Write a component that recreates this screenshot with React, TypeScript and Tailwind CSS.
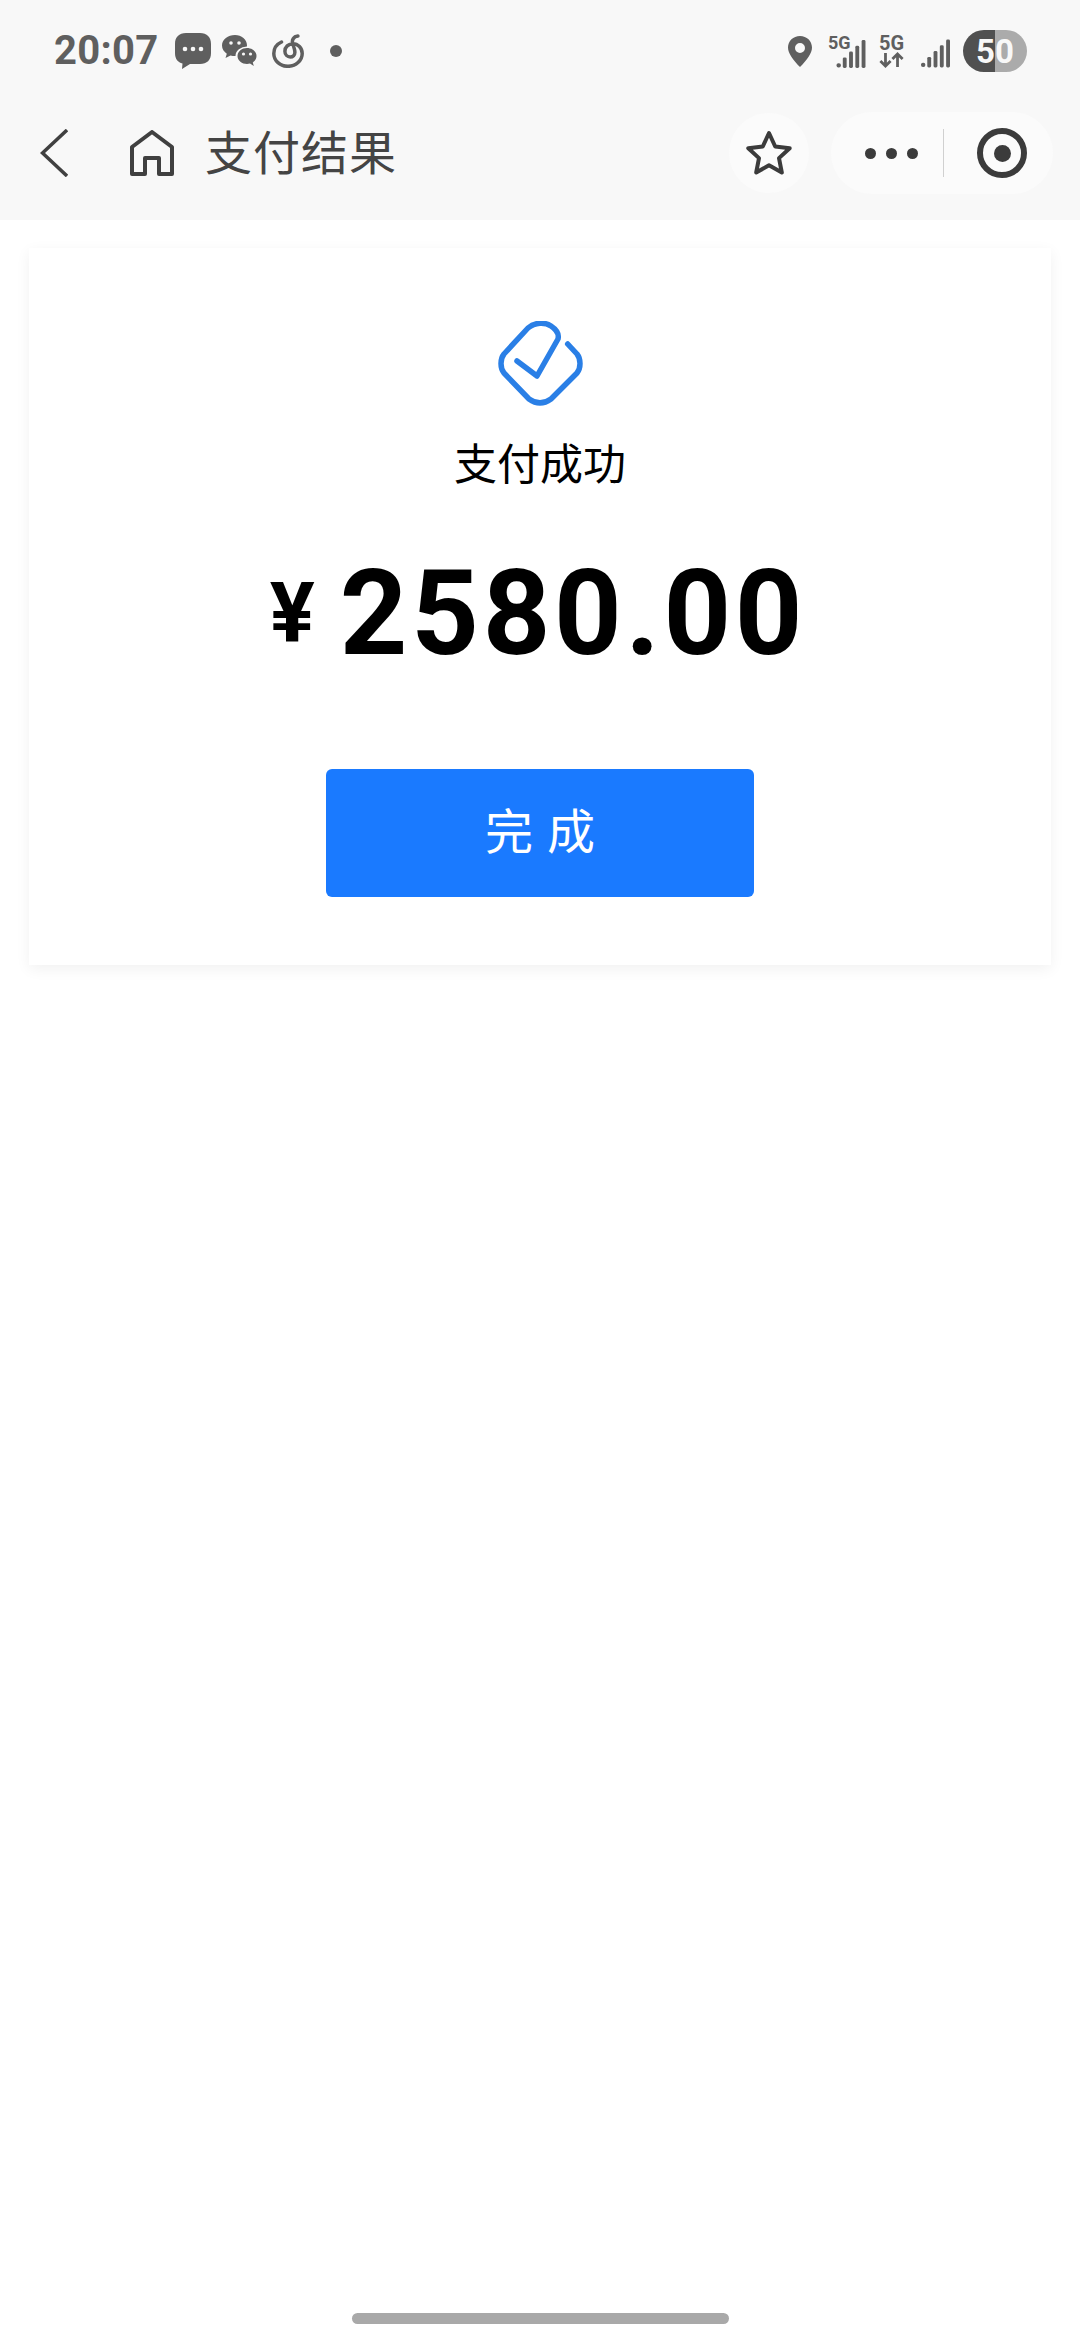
const sans = "font-['Roboto','Noto_Sans_CJK_SC',sans-serif]";

function SignalBars({ className }: { className: string }) {
  return (
    <svg viewBox="0 0 30 29" className={className} fill="#5f5f5f">
      <rect x="0" y="24" width="4.500" height="4.500" rx="2" />
      <rect x="6.500" y="18" width="4" height="11" rx="1.500" />
      <rect x="13" y="12" width="4" height="17" rx="1.500" />
      <rect x="19.500" y="6" width="4" height="23" rx="1.500" />
      <rect x="26" y="0" width="4" height="29" rx="1.500" />
    </svg>
  );
}

function StatusBar() {
  return (
    <div className="flex items-center justify-between h-[102px] pl-[54px] pr-[53px]">
      <div className="flex items-center">
        <span className="text-[40px] leading-none font-bold tracking-[0.3px] text-[#5f5f5f]">20:07</span>
        {/* message bubble */}
        <svg viewBox="0 0 36 36" className="w-[36px] h-[36px] ml-[16px]">
          <path
            d="M11 0h14c7 0 11 4 11 11v9c0 7-4 11-11 11H15l-8 5 .5-5.500C3 29.500 0 26 0 20v-9C0 4 4 0 11 0z"
            fill="#5f5f5f"
          />
          <circle cx="10" cy="16" r="2.300" fill="#f8f8f8" />
          <circle cx="18" cy="16" r="2.300" fill="#f8f8f8" />
          <circle cx="26" cy="16" r="2.300" fill="#f8f8f8" />
        </svg>
        {/* wechat */}
        <svg viewBox="0 0 36 32" className="w-[36px] h-[32px] ml-[11px]">
          <path
            d="M13 0C6 0 0 4.500 0 10.500c0 3.500 2 6.300 4.800 8.200L3.500 23l5-2.600c1.500.4 3 .6 4.500.6 6.500 0 12-4.500 12-10.500S19.500 0 13 0z"
            fill="#5f5f5f"
          />
          <ellipse cx="25" cy="21" rx="11.500" ry="9.500" fill="#f8f8f8" />
          <path
            d="M25 13c-5 0-9.500 3.400-9.500 8s4.500 8 9.500 8c1 0 2-.1 3-.4l3.800 2.400-1-3.500c2.300-1.500 3.700-4 3.700-6.500 0-4.600-4.500-8-9.500-8z"
            fill="#5f5f5f"
          />
          <circle cx="9" cy="8" r="1.800" fill="#f8f8f8" />
          <circle cx="17" cy="8" r="1.800" fill="#f8f8f8" />
          <circle cx="21.500" cy="19" r="1.600" fill="#f8f8f8" />
          <circle cx="28.500" cy="19" r="1.600" fill="#f8f8f8" />
        </svg>
        {/* netease music */}
        <svg viewBox="0 0 32 34" className="w-[32px] h-[34px] ml-[14px]" fill="none" stroke="#5f5f5f">
          <path
            d="M9.500 8C4.500 10.300 1.800 14.500 1.800 19.500c0 7.300 6.400 12.800 14.200 12.800s14.200-5.800 14.200-12.800c0-5.500-4.300-9.800-9.300-9.800-4.500 0-8 3.300-8 7.600 0 3.300 2.500 5.700 5.300 5.700 2.700 0 4.700-2 4.700-4.700 0-3-1.300-5.500-2.300-9-.8-3 .7-6.800 5.300-7.300"
            strokeWidth="3.500"
            strokeLinecap="round"
          />
        </svg>
        <span className="w-[12px] h-[12px] rounded-full bg-[#5f5f5f] ml-[26px]" />
      </div>

      <div className="flex items-center">
        {/* location pin */}
        <svg viewBox="0 0 24 31" className="w-[24px] h-[31px]">
          <path
            fillRule="evenodd"
            d="M12 0c6.800 0 12 5 12 11.500 0 5.500-5 12.500-12 19.500C5 24 0 17 0 11.500 0 5 5.200 0 12 0zm0 7a5 5 0 1 0 0 10 5 5 0 0 0 0-10z"
            fill="#5f5f5f"
          />
        </svg>
        <div className="relative w-[38px] h-[34px] ml-[16px]">
          <span className="absolute left-0 top-[-2px] text-[18px] leading-[22px] font-bold text-[#5f5f5f]">5G</span>
          <SignalBars className="absolute right-0 bottom-0 w-[30px] h-[28px]" />
        </div>
        <div className="flex flex-col items-center w-[25px] ml-[13px]">
          <span className="text-[20px] leading-[18px] font-bold text-[#5f5f5f]">5G</span>
          <svg viewBox="0 0 27 17" className="w-[25px] h-[16px]" fill="none" stroke="#5f5f5f" strokeWidth="3">
            <path d="M7 1v14M1.500 9.500L7 15l5.500-5.500" />
            <path d="M20 16V2M14.500 7.500L20 2l5.500 5.500" />
          </svg>
        </div>
        <SignalBars className="w-[29px] h-[29px] ml-[17px] mt-[4px]" />
        <div className="relative flex w-[64px] h-[42px] ml-[13px] rounded-full overflow-hidden">
          <span className="w-[32px] bg-[#505050]" />
          <span className="w-[32px] bg-[#ababab]" />
          <span className="absolute inset-0 flex items-center justify-center text-[33px] leading-none font-bold text-[#f8f8f8]">
            50
          </span>
        </div>
      </div>
    </div>
  );
}

function NavBar() {
  return (
    <div className="flex items-center h-[118px] pb-[16px]">
      <svg viewBox="0 0 28 48" className="w-[28px] h-[48px] ml-[40px]" fill="none" stroke="#404040" strokeWidth="3.500">
        <path d="M27 1L2.500 24 27 47" />
      </svg>
      <svg viewBox="0 0 44 47" className="w-[44px] h-[47px] ml-[62px]" fill="none" stroke="#404040" strokeWidth="4" strokeLinejoin="round">
        <path d="M22 2L42 17v27H29V28H15v16H2V17z" />
      </svg>
      <span className="text-[47px] tracking-[1px] leading-none ml-[31px] text-[#444]">支付结果</span>

      <div className="flex items-center justify-center w-[80px] h-[80px] ml-auto rounded-full bg-[#fbfbfb]">
        <svg viewBox="0 0 46 46" className="w-[46px] h-[46px]" fill="none" stroke="#3b3b3b" strokeWidth="4" strokeLinejoin="round">
          <path d="M23 3l6.200 13.500 14.500 1.700-10.700 9.900 2.800 14.400L23 35.300l-12.800 7.200L13 28.100 2.300 18.200l14.500-1.700z" />
        </svg>
      </div>
      <div className="flex items-center w-[222px] h-[82px] ml-[22px] mr-[27px] rounded-full bg-[#fbfbfb]">
        <div className="flex items-center gap-[10px] ml-[34px]">
          <span className="w-[11px] h-[11px] rounded-full bg-[#3b3b3b]" />
          <span className="w-[11px] h-[11px] rounded-full bg-[#3b3b3b]" />
          <span className="w-[11px] h-[11px] rounded-full bg-[#3b3b3b]" />
        </div>
        <span className="w-[1px] h-[48px] ml-[25px] bg-[#d0d0d0]" />
        <div className="flex items-center justify-center w-[50px] h-[50px] ml-[33px] rounded-full border-[6px] border-[#3b3b3b]">
          <span className="w-[17px] h-[17px] rounded-full bg-[#3b3b3b]" />
        </div>
      </div>
    </div>
  );
}

export default function App() {
  return (
    <div className={`flex flex-col w-[1080px] h-[2340px] bg-white ${sans}`}>
      <div className="bg-[#f8f8f8]">
        <StatusBar />
        <NavBar />
      </div>

      <div className="flex flex-col items-center h-[717px] mx-[29px] mt-[28px] pt-[73px] bg-white shadow-[0_4px_14px_rgba(0,0,0,0.06)]">
        <svg viewBox="0 0 85 85" className="w-[85px] h-[85px]" fill="none" stroke="#2a7fe6" strokeWidth="5.500" strokeLinecap="round" strokeLinejoin="round">
          <path d="M69.700 23L79 33c4 5 4 14 0 19L53 78c-7 5-15 5-22 0L6 52c-4-5-4-14 0-19L30 7c7-6 17-6 23-2 6 4 8 9 7 13L39 55 19 40" />
        </svg>
        <div className="mt-[30px] text-[43px] leading-[58px] text-black">支付成功</div>
        <div className="flex items-center mt-[55px] mr-[4px] font-bold text-black">
          <span className="text-[84px] leading-[130px]">¥</span>
          <span className="text-[118px] leading-[130px] tracking-[3.700px] ml-[25px]">2580.00</span>
        </div>
        <button className="w-[428px] h-[128px] mt-[90px] rounded-[6px] bg-[#1a7aff] text-white text-[48px] tracking-[14px] indent-[14px]">
          完成
        </button>
      </div>

      <div className="mt-auto mb-[16px] mx-auto w-[377px] h-[11px] rounded-full bg-[#a9a9a9]" />
    </div>
  );
}
